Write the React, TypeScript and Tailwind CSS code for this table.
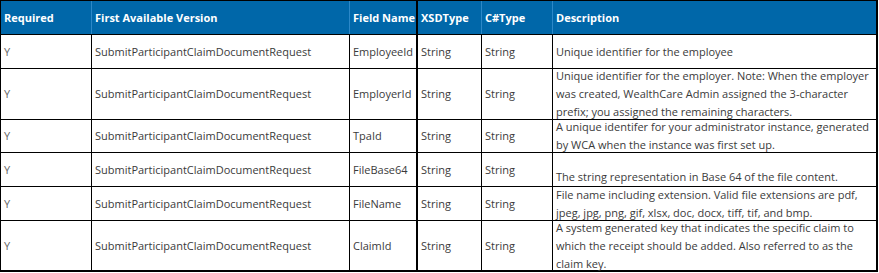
import React from "react";

const rows: { fn: string; desc: React.ReactNode; h: string; last?: boolean; bottom?: boolean }[] = [
  { fn: "EmployeeId", desc: "Unique identifier for the employee", h: "h-[34px]" },
  {
    fn: "EmployerId",
    desc: "Unique identifier for the employer. Note: When the employer was created, WealthCare Admin assigned the 3-character prefix; you assigned the remaining characters.",
    h: "h-[51px]",
  },
  {
    fn: "TpaId",
    desc: "A unique identifer for your administrator instance, generated by WCA when the instance was first set up.",
    h: "h-[33px]",
  },
  { fn: "FileBase64", desc: "The string representation in Base 64 of the file content.", h: "h-[34px]", bottom: true },
  {
    fn: "FileName",
    desc: "File name including extension. Valid file extensions are pdf, jpeg, jpg, png, gif, xlsx, doc, docx, tiff, tif, and bmp.",
    h: "h-[34px]",
  },
  {
    fn: "ClaimId",
    desc: "A system generated key that indicates the specific claim to which the receipt should be added. Also referred to as the claim key.",
    h: "h-[51px]",
    last: true,
  },
];

const W = ["w-[91px]", "w-[258px]", "w-[67px]", "w-[65px]", "w-[71px]", "w-[325px]"];

export default function App() {
  const hc = "flex items-center px-[3px] whitespace-nowrap border-r border-[#2c88c8] shrink-0";
  const bc = "flex items-center px-[3px] border-r border-black shrink-0";
  return (
    <div className="w-[879px] h-[273px] bg-white" style={{ fontFamily: '"Open Sans", sans-serif' }}>
      <div className="w-[878px] border-l border-t border-black text-[11px] leading-[18px] text-[#3b3b3b]">
        <div className="flex h-[34px] bg-[#0067a9] text-white font-bold border-b border-black">
          <div className={hc + " " + W[0]}>Required</div>
          <div className={hc + " " + W[1]}>First Available Version</div>
          <div className={hc + " " + W[2] + " border-r-black"}>Field Name</div>
          <div className={hc + " " + W[3] + " border-l border-l-black"}>XSDType</div>
          <div className={hc + " " + W[4]}>C#Type</div>
          <div className={hc + " " + W[5] + " border-r-2 border-r-black"}>Description</div>
        </div>
        {rows.map((r) => (
          <div key={r.fn} className={"flex border-black " + r.h + (r.last ? " border-b-2" : " border-b")}>
            <div className={bc + " " + W[0] + " text-[#666]"}>Y</div>
            <div className={bc + " " + W[1]}>SubmitParticipantClaimDocumentRequest</div>
            <div className={bc + " " + W[2]}>{r.fn}</div>
            <div className={bc + " " + W[3] + " border-l"}>String</div>
            <div className={bc + " " + W[4]}>String</div>
            <div className={bc + " " + W[5] + " border-r-2 pr-[2px]" + (r.bottom ? " !items-end" : "")}>
              <span>{r.desc}</span>
            </div>
          </div>
        ))}
      </div>
    </div>
  );
}
